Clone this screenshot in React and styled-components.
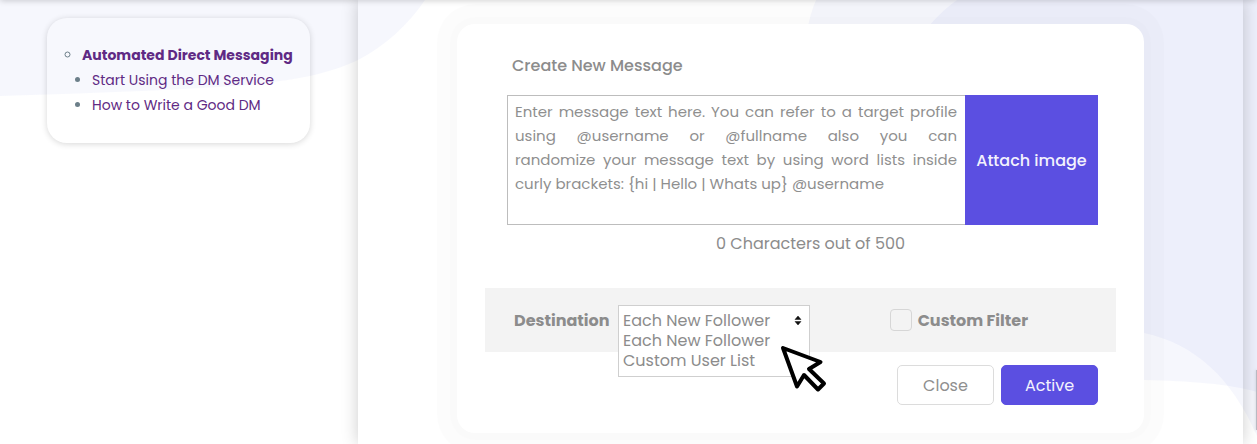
import React from 'react'
import styled, { createGlobalStyle } from 'styled-components'

const GlobalStyle = createGlobalStyle`
    *{
        box-sizing: border-box;
    }
    body{
        margin: 0;
        background: #fff;
        color: #8c8c8c;
        font-family: Poppins, Inter, sans-serif;
        font-size: 16px;
    }
    button, input, select, textarea{
        font: inherit;
        color: inherit;
        margin: 0;
    }
    ul{
        margin: 0;
        padding: 0;
    }
`

const PageStyles = styled.div`
    position: relative;
    display: grid;
    grid-template-columns: 358px 1fr 14px;
    min-height: 100vh;
    overflow: hidden;
    &::after{
        content: '';
        position: absolute;
        top: -4px;
        left: 0;
        right: 0;
        height: 4px;
        box-shadow: 0 0 6px rgba(0, 0, 0, .28);
    }
`

const Blobs = styled.svg`
    position: absolute;
    top: 0;
    left: 0;
    width: 100%;
    height: 100%;
    fill: rgba(105, 122, 222, .06);
`

const Sidebar = styled.aside`
    position: relative;
    padding: 18px 48px 18px 47px;
`

const TopicCard = styled.nav`
    padding: 25px 16px 25px 35px;
    border-radius: 20px;
    background: rgba(255, 255, 255, .2);
    box-shadow: 0 1px 6px rgba(0, 0, 0, .16);
    font-size: 14px;
    line-height: 25px;
    white-space: nowrap;
    ul{
        list-style: circle;
    }
    ul ul{
        list-style: disc;
        padding-left: 10px;
    }
    li::marker{
        color: #6c7f89;
    }
`

const TopicLink = styled.a`
    color: #5f2a84;
    text-decoration: none;
    font-weight: ${props => props.$main ? 700 : 400};
`

const Article = styled.main`
    position: relative;
    padding: 24px 99px 11px;
    box-shadow: 0 0 16px rgba(0, 0, 0, .2);
`

const Gutter = styled.div`
    position: relative;
    display: flex;
    justify-content: flex-end;
    align-items: flex-end;
    padding-bottom: 14px;
`

const ScrollThumb = styled.div`
    width: 1px;
    height: 60px;
    background: #b9b9c2;
    box-shadow: 0 0 3px rgba(0, 0, 0, .25);
`

const MessageCard = styled.form`
    padding: 30px 28px 28px;
    border-radius: 18px;
    background: #fff;
    box-shadow: 0 0 0 7px rgba(0, 0, 0, .008), 0 0 0 20px rgba(0, 0, 0, .012);
`

const Title = styled.h2`
    margin: 0 0 17px;
    padding-left: 27px;
    font-size: 16px;
    font-weight: 500;
    line-height: 24px;
`

const Editor = styled.div`
    display: flex;
    height: 130px;
    margin: 0 18px 0 22px;
`

const MessageBox = styled.textarea`
    flex: 1;
    min-width: 0;
    padding: 4px 8px 4px 7px;
    border: 1px solid #bdbdbd;
    border-right: 0;
    border-radius: 0;
    background: #fff;
    font-size: 15px;
    line-height: 24px;
    text-align: justify;
    resize: none;
    outline: none;
    overflow: hidden;
    &::placeholder{
        color: #8f8f8f;
        opacity: 1;
    }
`

const AttachButton = styled.button`
    width: 133px;
    padding: 0;
    border: 0;
    background: #5b4fe1;
    color: #f3f2fd;
    font-weight: 500;
`

const Counter = styled.p`
    margin: 7px 0 32px;
    padding-left: 20px;
    line-height: 24px;
    text-align: center;
`

const Options = styled.div`
    display: flex;
    align-items: center;
    height: 64px;
    padding-left: 29px;
    padding-right: 88px;
    background: #f3f3f3;
    label{
        font-weight: 700;
    }
`

const DestinationLabel = styled.label`
    width: 104px;
`

const DropDown = styled.div`
    position: relative;
    width: 192px;
    height: 30px;
    > svg{
        position: absolute;
    }
`

const Select = styled.select`
    display: block;
    width: 100%;
    height: 100%;
    padding: 0 4px;
    border: 1px solid #cfcfcf;
    border-bottom: 0;
    border-radius: 0;
    background: #fff;
    appearance: none;
    outline: none;
`

const Menu = styled.ul`
    position: absolute;
    top: 26px;
    left: 0;
    width: 100%;
    padding: 0 4px 5px;
    border: 1px solid #cfcfcf;
    border-top: 0;
    background: #fff;
    line-height: 20px;
    list-style: none;
`

const Arrows = styled.svg`
    top: 10px;
    right: 8px;
    width: 8px;
    height: 11px;
`

const Pointer = styled.svg`
    top: 39px;
    left: 161px;
    width: 50px;
    height: 50px;
`

const Filter = styled.div`
    display: flex;
    align-items: center;
    gap: 6px;
    margin-left: auto;
`

const CheckBox = styled.input`
    appearance: none;
    width: 22px;
    height: 22px;
    border: 1px solid #d6d6d6;
    border-radius: 4px;
`

const Actions = styled.div`
    display: flex;
    justify-content: flex-end;
    gap: 7px;
    padding: 13px 18px 0 0;
`

const ActionButton = styled.button`
    width: 97px;
    height: 40px;
    padding: 0;
    border: 1px solid ${props => props.$primary ? '#5b4fe1' : '#dcdcdc'};
    border-radius: 5px;
    background: ${props => props.$primary ? '#5b4fe1' : '#fff'};
    color: ${props => props.$primary ? '#f3f2fd' : '#8f8f8f'};
`

// non-breaking spaces keep these word pairs on one line
const hint = 'Enter message text here. You can refer to a target profile using @username or @fullname also you can randomize\u00A0your message text by using word lists inside curly\u00A0brackets: {hi | Hello | Whats up} @username'

function App() {
    return (
        <PageStyles>
            <GlobalStyle />
            <Blobs viewBox='0 0 1257 444' preserveAspectRatio='none' aria-hidden='true'>
                <path d='M0 0H425C408 25 385 46 358 60C318 79 270 84 200 88C130 92 60 94 0 96Z' />
                <path d='M816 0C790 60 800 200 900 260C980 310 1060 318 1144 333C1195 344 1232 378 1257 436V0Z' />
                <path d='M957 0C900 40 860 140 880 240C900 350 1040 378 1144 380C1190 381 1230 384 1257 392V0Z' />
            </Blobs>
            <Sidebar>
                <TopicCard>
                    <ul>
                        <li>
                            <TopicLink href='#automated-dm' $main>Automated Direct Messaging</TopicLink>
                            <ul>
                                <li><TopicLink href='#start'>Start Using the DM Service</TopicLink></li>
                                <li><TopicLink href='#write'>How to Write a Good DM</TopicLink></li>
                            </ul>
                        </li>
                    </ul>
                </TopicCard>
            </Sidebar>
            <Article>
                <MessageCard>
                    <Title>Create New Message</Title>
                    <Editor>
                        <MessageBox aria-label='Message text' placeholder={hint} />
                        <AttachButton type='button'>Attach image</AttachButton>
                    </Editor>
                    <Counter>0 Characters out of 500</Counter>
                    <Options>
                        <DestinationLabel htmlFor='destination'>Destination</DestinationLabel>
                        <DropDown>
                            <Select id='destination'>
                                <option>Each New Follower</option>
                                <option>Custom User List</option>
                            </Select>
                            <Menu>
                                <li>Each New Follower</li>
                                <li>Custom User List</li>
                            </Menu>
                            <Arrows viewBox='0 0 8 11' aria-hidden='true'>
                                <path d='M4 1L7 4.5H1ZM4 10L1 6.5H7Z' fill='#111' stroke='#111' strokeWidth='.5' />
                            </Arrows>
                            <Pointer viewBox='0 0 50 50' aria-hidden='true'>
                                <path
                                    d='M4 4L41.5 18L30 25L45 39.5L39 45.5L25 31L18 42.5Z'
                                    fill='#fff'
                                    stroke='#000'
                                    strokeWidth='4'
                                    strokeLinejoin='round'
                                />
                            </Pointer>
                        </DropDown>
                        <Filter>
                            <CheckBox type='checkbox' id='custom-filter' />
                            <label htmlFor='custom-filter'>Custom Filter</label>
                        </Filter>
                    </Options>
                    <Actions>
                        <ActionButton type='button'>Close</ActionButton>
                        <ActionButton type='button' $primary>Active</ActionButton>
                    </Actions>
                </MessageCard>
            </Article>
            <Gutter>
                <ScrollThumb />
            </Gutter>
        </PageStyles>
    )
}

export default App
